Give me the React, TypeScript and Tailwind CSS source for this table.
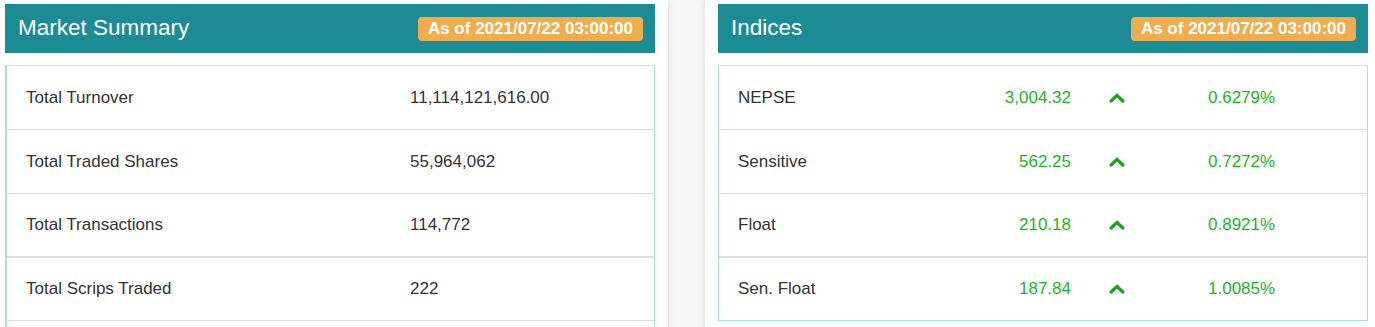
import React from "react";

const font = { fontFamily: '"Liberation Sans", Arial, Helvetica, sans-serif' };

function Header({ title }: { title: string }) {
  return (
    <div className="flex h-[49px] items-center justify-between bg-[#1c8b95] pl-[13px] pr-[12px]">
      <span className="pb-[1px] text-[22.5px] leading-none text-white">{title}</span>
      <span className="flex h-[24px] items-center rounded-[4px] bg-[#f0ad4e] pl-[10px] pr-[10px] text-[17px] font-bold leading-none text-white">
        As of 2021/07/22 03:00:00
      </span>
    </div>
  );
}

function Chevron() {
  return (
    <svg width="16" height="10" viewBox="0 0 16 10" className="block">
      <polyline
        points="2.2,8 8,2.4 13.8,8"
        fill="none"
        stroke="#17a817"
        strokeWidth="3.4"
        strokeLinecap="round"
        strokeLinejoin="round"
      />
    </svg>
  );
}

const summary = [
  ["Total Turnover", "11,114,121,616.00"],
  ["Total Traded Shares", "55,964,062"],
  ["Total Transactions", "114,772"],
  ["Total Scrips Traded", "222"],
];

const indices = [
  ["NEPSE", "3,004.32", "0.6279%"],
  ["Sensitive", "562.25", "0.7272%"],
  ["Float", "210.18", "0.8921%"],
  ["Sen. Float", "187.84", "1.0085%"],
];

export default function App() {
  return (
    <div className="h-[327px] w-full overflow-hidden bg-[#f7f7f7]" style={font}>
      <div className="flex w-[1420px] gap-[37px]">
        {/* Left card */}
        <div className="h-[360px] w-[668px] shrink-0 bg-white pl-[5px] pr-[13px] pt-[4px] shadow-[0_0_6px_rgba(0,0,0,0.13)]">
          <Header title="Market Summary" />
          <div className="mt-[12px] border-t border-l-2 border-r border-t-[#dddddd] border-l-[#a8e2d4] border-r-[#a8e2d4]">
            {summary.map(([label, value], i) => (
              <div
                key={label}
                className={`flex items-center border-[#dddddd] pl-[19px] text-[17px] text-[#333333] ${
                  i === 2 ? "h-[64px] border-b-2" : i === 3 ? "h-[63px] border-b" : "h-[64px] border-b"
                }`}
              >
                <span className="w-[384px] shrink-0">{label}</span>
                <span>{value}</span>
              </div>
            ))}
            <div className="h-[20px]" />
          </div>
        </div>

        {/* Right card */}
        <div className="h-[360px] w-[676px] shrink-0 bg-white pl-[13px] pr-[13px] pt-[4px] shadow-[0_0_6px_rgba(0,0,0,0.13)]">
          <Header title="Indices" />
          <div className="mt-[12px] border border-t-[#dddddd] border-l-[#a8e2d4] border-r-[#a8e2d4] border-b-[#a8e2d4]">
            {indices.map(([label, value, pct], i) => (
              <div
                key={label}
                className={`flex items-center border-[#dddddd] pl-[19px] text-[17px] ${
                  i === 3 ? "h-[62px]" : i === 2 ? "h-[64px] border-b-2" : "h-[64px] border-b"
                }`}
              >
                <span className="w-[253px] shrink-0 text-[#333333]">{label}</span>
                <span className="w-[80px] shrink-0 text-right text-[#1db51d]">{value}</span>
                <span className="ml-[38px] shrink-0">
                  <Chevron />
                </span>
                <span className="ml-[83px] text-[#1db51d]">{pct}</span>
              </div>
            ))}
          </div>
        </div>
      </div>
    </div>
  );
}
